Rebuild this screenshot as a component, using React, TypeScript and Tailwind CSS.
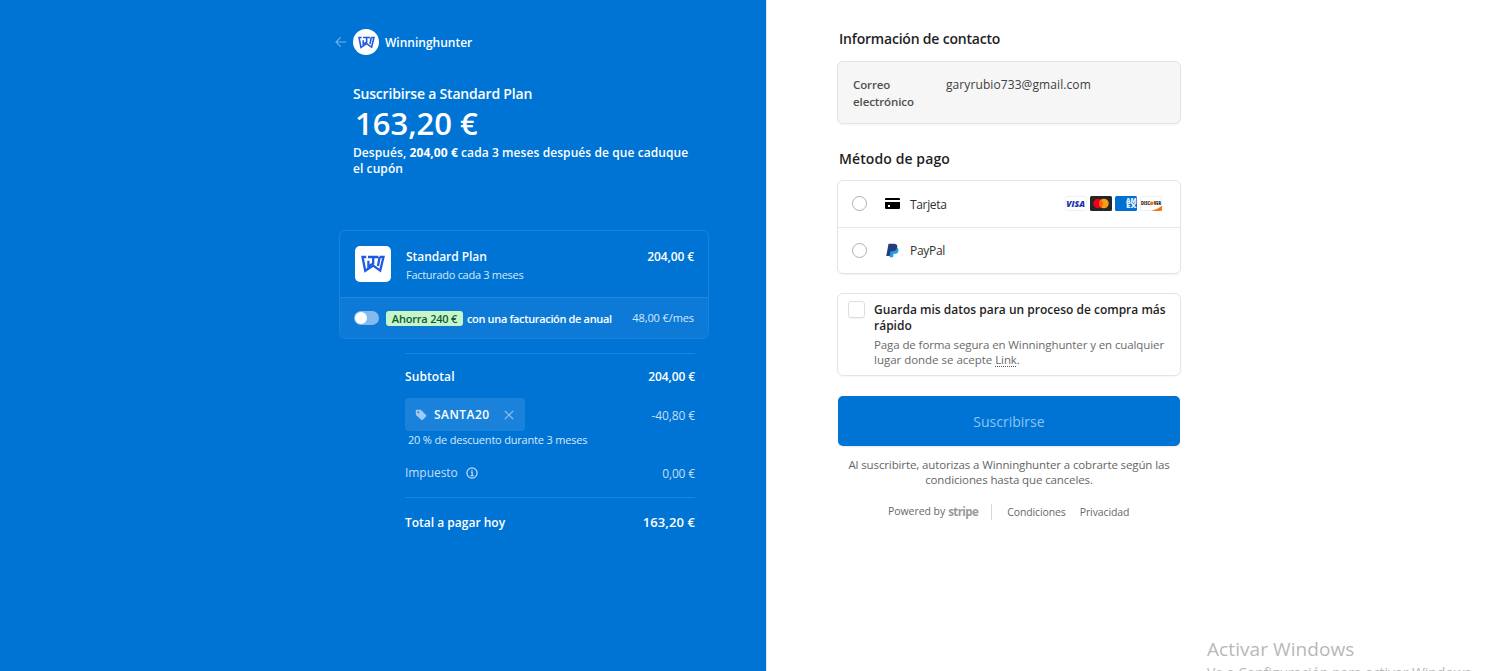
import React from 'react';

const Logo: React.FC<{ className: string }> = ({ className }) => (
  <svg viewBox="0 0 24 18" fill="none" stroke="#1f5be0" strokeWidth="2.3" className={className}>
    <path d="M5.2 2H1.5L4.2 15.8L12.2 10.6L19.2 15.6L22.5 2H18.6" />
    <path d="M7 2H17.2M12.2 2V8.6L7.4 11.4V5.8M18.6 2L17 11" />
  </svg>
);

const BackArrow = () => (
  <svg viewBox="0 0 12 12" fill="none" stroke="#6fb0ea" strokeWidth="1.2" className="h-3 w-3">
    <path d="M11.3 6H1M5.6 1.4L1 6L5.6 10.6" />
  </svg>
);

const TagIcon = () => (
  <svg viewBox="0 0 12 12" className="h-3 w-3">
    <path
      fill="#9fcaf2"
      fillRule="evenodd"
      d="M1.6.8H5.2C5.7.8 6 1 6.3 1.2L11 5.9C11.5 6.4 11.5 7 11 7.5L7.8 10.8C7.3 11.2 6.7 11.2 6.2 10.8L1.2 6.2C.9 5.9.8 5.6.8 5.2V1.6C.8 1.1 1.1.8 1.6.8ZM3.3 2.3A1 1 0 1 0 3.3 4.3A1 1 0 1 0 3.3 2.3Z"
    />
  </svg>
);

const InfoIcon = () => (
  <svg viewBox="0 0 12 12" fill="none" stroke="#c3def6" strokeWidth="1.2" className="h-3 w-3">
    <circle cx="6" cy="6" r="5.1" />
    <path d="M4.8 5.2H6.2V8.6M4.6 8.6H7.6" />
    <circle cx="6" cy="3.3" r=".4" fill="#c3def6" strokeWidth=".6" />
  </svg>
);

const CardIcon = () => (
  <svg viewBox="0 0 15 11" className="h-[11px] w-[15px]">
    <path d="M1 0H14Q15 0 15 1V2H0V1Q0 0 1 0Z" />
    <path fillRule="evenodd" d="M0 4H15V10Q15 11 14 11H1Q0 11 0 10ZM3 7V9H5V7Z" />
  </svg>
);

const PayPalIcon = () => (
  <svg viewBox="0 0 14 16" className="h-[15px] w-[13px]">
    <path fill="#1ba0e2" d="M5 5H12C13.6 6.2 13.8 8 13 9.5C12.2 11 10.8 11.6 9.2 11.6H8.2L7.6 15.2H3.8Z" />
    <path fill="#253b80" d="M2.7.6H8.6C11.4.6 12.6 2.2 12 4.8C11.4 7.7 9.6 8.8 7 8.8H5L4 14H.3Z" />
  </svg>
);

const CardBrands = () => (
  <div className="mb-px flex gap-[3px]">
    <svg viewBox="0 0 22 15" className="h-[15px] w-[22px]">
      <rect x=".5" y=".5" width="21" height="14" rx="1.5" fill="#fff" stroke="#f0f0f0" />
      <text x="1.3" y="10.8" textLength="18.6" lengthAdjust="spacingAndGlyphs" fontSize="8.8" fontWeight="800" fontStyle="italic" fill="#1b2fae">VISA</text>
    </svg>
    <svg viewBox="0 0 22 15" className="h-[15px] w-[22px]">
      <rect width="22" height="15" rx="1.5" fill="#252525" />
      <circle cx="8.1" cy="7.5" r="4.8" fill="#eb001b" />
      <circle cx="13.9" cy="7.5" r="4.8" fill="#f79e1b" />
      <path d="M11 3.7A4.8 4.8 0 0 1 11 11.3A4.8 4.8 0 0 1 11 3.7Z" fill="#ff5f00" />
    </svg>
    <svg viewBox="0 0 22 15" className="h-[15px] w-[22px]">
      <rect width="22" height="15" rx="1.5" fill="#016fd0" />
      <text x="11" y="7.4" textLength="10.5" lengthAdjust="spacingAndGlyphs" fontSize="6" fontWeight="800" fill="#e6f3ff">AM</text>
      <text x="11" y="12.2" textLength="10.5" lengthAdjust="spacingAndGlyphs" fontSize="6" fontWeight="800" fill="#e6f3ff">EX</text>
    </svg>
    <svg viewBox="0 0 22 15" className="h-[15px] w-[22px]">
      <rect x=".5" y=".5" width="21" height="14" rx="1.5" fill="#fff" stroke="#f0f0f0" />
      <path d="M22 9.8C19 12 16 13.6 11.5 15H20.5Q22 15 22 13.5Z" fill="#f27712" />
      <text x="1" y="9" textLength="9" lengthAdjust="spacingAndGlyphs" fontSize="4.6" fontWeight="800" fill="#2b1c18">DISC</text>
      <circle cx="11.7" cy="7.3" r="1.9" fill="#f27712" />
      <text x="13.7" y="9" textLength="7.3" lengthAdjust="spacingAndGlyphs" fontSize="4.6" fontWeight="800" fill="#2b1c18">VER</text>
    </svg>
  </div>
);

const Summary = () => (
  <section className="h-full w-[766px] bg-[#0074d4] pl-[335px] pt-[29px] text-white">
    <div className="flex h-[26px] items-center">
      <BackArrow />
      <div className="ml-[6px] flex h-[26px] w-[26px] items-center justify-center rounded-full bg-white">
        <Logo className="h-[13px] w-[17px]" />
      </div>
      <span className="ml-[6px] pt-px text-[12px] font-semibold">Winninghunter</span>
    </div>

    <div className="ml-[18px] mt-[29px] w-[345px]">
      <h1 className="text-[14px] font-semibold leading-[20px] tracking-[-0.19px]">Suscribirse a Standard Plan</h1>
      <p className="ml-[2px] mb-[2px] mt-[-1px] text-[31px] font-semibold leading-[40px]">163,20 €</p>
      <p className="whitespace-nowrap text-[12px] font-semibold leading-[16px] tracking-[0.08px]">
        Después, <span className="font-bold">204,00 €</span> cada 3 meses después de que caduque
        <br />
        el cupón
      </p>
    </div>

    <div className="ml-[4px] mt-[53px] h-[109px] w-[370px] overflow-hidden rounded-[6px] border border-[#1a83dc]">
      <div className="flex h-[66px] items-center pl-[15px] pr-[14px]">
        <div className="flex h-9 w-9 items-center justify-center rounded-[5px] bg-white">
          <Logo className="h-[18px] w-[24px]" />
        </div>
        <div className="ml-[15px] flex-1 pt-[3px]">
          <p className="pt-px text-[12px] font-semibold leading-[18px] tracking-[-0.05px]">Standard Plan</p>
          <p className="text-[11px] leading-[18px] tracking-[-0.29px] text-[#d5e9fa]">Facturado cada 3 meses</p>
        </div>
        <span className="mb-[15px] text-[12px] font-semibold leading-[18px] tracking-[-0.1px]">204,00 €</span>
      </div>
      <div className="flex h-[42px] items-center border-t border-[#2086dc] bg-[#0e7ad7] pl-[14px] pr-[14px]">
        <div className="mb-px flex h-[14px] w-[25px] items-center rounded-full bg-[#84baec] pl-[1px]">
          <div className="h-3 w-3 rounded-full bg-white" />
        </div>
        <span className="ml-[7px] h-[15px] w-[77px] rounded-[3px] bg-[#c6f6c8] text-center text-[11px] font-semibold leading-[16px] tracking-[-0.2px] text-[#0a5a3c]">
          Ahorra 240 €
        </span>
        <span className="ml-[4px] flex-1 whitespace-nowrap pt-[2px] text-[11px] font-semibold tracking-[-0.35px]">con una facturación de anual</span>
        <span className="text-[11px] tracking-[-0.1px] text-[#d5e9fa]">48,00 €/mes</span>
      </div>
    </div>

    <div className="ml-[70px] mt-[14px] w-[290px] border-t border-[#1a83dc]">
      <div className="mt-[14px] flex h-[18px] items-center justify-between text-[12px] font-semibold">
        <span className="tracking-[0.1px]">Subtotal</span>
        <span className="tracking-[-0.1px]">204,00 €</span>
      </div>
      <div className="mt-[12px] flex h-[33px] items-center justify-between">
        <div className="flex h-[33px] w-[120px] items-center rounded-[4px] bg-[#1a82da] pl-[10px] pr-[11px]">
          <TagIcon />
          <span className="ml-[7px] flex-1 pt-px text-[12px] font-semibold tracking-[0.45px]">SANTA20</span>
          <svg viewBox="0 0 10 10" stroke="#93c4f0" strokeWidth="1.2" className="h-[10px] w-[10px]">
            <path d="M.8.8L9.2 9.2M9.2.8L.8 9.2" />
          </svg>
        </div>
        <span className="pt-[2px] text-[12px] tracking-[-0.1px] text-[#c3def6]">-40,80 €</span>
      </div>
      <p className="ml-[3px] text-[11px] leading-[18px] tracking-[-0.19px] text-[#d5e9fa]">20 % de descuento durante 3 meses</p>
      <div className="mt-[15px] flex h-[18px] items-center text-[12px] text-[#c3def6]">
        <span className="mr-[8px] tracking-[-0.05px]">Impuesto</span>
        <InfoIcon />
        <span className="ml-auto pt-px tracking-[-0.15px]">0,00 €</span>
      </div>
      <div className="mt-[15px] flex h-[50px] items-center justify-between border-t border-[#1a83dc] font-semibold">
        <span className="pt-px text-[12px]">Total a pagar hoy</span>
        <span className="text-[13px] tracking-[0.1px]">163,20 €</span>
      </div>
    </div>
  </section>
);

const Checkout = () => (
  <section className="h-full flex-1 border-l border-[#e3e3e3] pl-[70px] pt-[29px] text-[#1f1f1f]">
    <div className="w-[344px]">
      <h2 className="ml-[2px] text-[14px] font-semibold leading-[20px] tracking-[-0.2px]">Información de contacto</h2>
      <div className="mt-[12px] flex h-[63px] rounded-[6px] border border-[#e4e4e4] bg-[#f6f6f6] pl-[15px] pt-[14px] text-[12px] leading-[17px] shadow-[0_1px_2px_rgba(0,0,0,0.05)]">
        <span className="w-[93px] text-[11.5px] font-semibold tracking-[-0.1px] text-[#505050]">
          Correo
          <br />
          electrónico
        </span>
        <span className="tracking-[0.09px] text-[#404040]">garyrubio733@gmail.com</span>
      </div>

      <h2 className="ml-[2px] mt-[25px] text-[14px] font-semibold leading-[20px] tracking-[0.1px]">Método de pago</h2>
      <div className="mt-[11px] rounded-[6px] border border-[#e4e4e4] text-[12px] text-[#303030] shadow-[0_1px_2px_rgba(0,0,0,0.06)]">
        <div className="flex h-[46px] items-center pl-[14px] pr-[18px]">
          <span className="mb-px h-[15px] w-[15px] rounded-full border border-[#b0b0b0]" />
          <span className="mb-px ml-[18px] mr-[10px]">
            <CardIcon />
          </span>
          <span className="flex-1 pt-px tracking-[-0.35px]">Tarjeta</span>
          <CardBrands />
        </div>
        <div className="flex h-[46px] items-center border-t border-[#e8e8e8] pl-[14px]">
          <span className="h-[15px] w-[15px] rounded-full border border-[#b0b0b0]" />
          <span className="ml-[19px] mr-[11px]">
            <PayPalIcon />
          </span>
          <span className="pt-px tracking-[-0.3px]">PayPal</span>
        </div>
      </div>

      <div className="mt-[19px] flex h-[83px] rounded-[6px] border border-[#e4e4e4] pl-[10px] pt-[7px] shadow-[0_1px_2px_rgba(0,0,0,0.04)]">
        <span className="h-[17px] w-[17px] rounded-[3px] border border-[#dedede] shadow-[0_1px_1px_rgba(0,0,0,0.06)]" />
        <div className="ml-[9px] whitespace-nowrap pt-px">
          <p className="text-[12px] font-semibold leading-[16px]">
            Guarda mis datos para un proceso de compra más
            <br />
            rápido
          </p>
          <p className="mt-[3px] text-[11.5px] leading-[15px] tracking-[-0.1px] text-[#6a6a6a]">
            Paga de forma segura en Winninghunter y en cualquier
            <br />
            <span className="tracking-[-0.02px]">lugar donde se acepte </span>
            <span className="underline decoration-[#555] decoration-dotted underline-offset-2">Link</span>.
          </p>
        </div>
      </div>

      <button className="ml-[1px] mt-[20px] block h-[50px] w-[342px] rounded-[5px] bg-[#0074d4] text-[14px] font-medium text-[#8fc4f2] shadow-[0_1px_2px_rgba(0,0,0,0.1)]">
        Suscribirse
      </button>

      <p className="mt-[11px] whitespace-nowrap text-center text-[11.5px] leading-[15px] tracking-[-0.12px] text-[#666]">
        Al suscribirte, autorizas a Winninghunter a cobrarte según las
        <br />
        condiciones hasta que canceles.
      </p>

      <div className="ml-[51px] mt-[16px] flex h-[17px] items-center whitespace-nowrap text-[10.5px] text-[#686868]">
        <span className="tracking-[-0.05px]">Powered by</span>
        <span className="ml-[3px] w-[31px] text-[11.5px] font-bold tracking-[-0.6px] text-[#9a9a9a]">stripe</span>
        <span className="ml-[12px] mr-[15px] h-4 w-px bg-[#d8d8d8]" />
        <span className="pt-[2px] tracking-[-0.12px]">Condiciones</span>
        <span className="ml-[14px] pt-[2px] tracking-[-0.1px]">Privacidad</span>
      </div>
    </div>
  </section>
);

export default function App() {
  return (
    <main className="relative flex h-[671px] w-[1500px] overflow-hidden bg-white font-['Open_Sans','Noto_Sans',sans-serif]">
      <Summary />
      <Checkout />
      {/* OS watermark floats above the page and runs off the bottom edge */}
      <div className="absolute left-[1207px] top-[636px] whitespace-nowrap text-[#b8b8b8]">
        <p className="text-[19px] leading-[26px] tracking-[0.08px]">Activar Windows</p>
        <p className="mt-px text-[14px] leading-[20px] tracking-[-0.05px]">Ve a Configuración para activar Windows.</p>
      </div>
    </main>
  );
}
